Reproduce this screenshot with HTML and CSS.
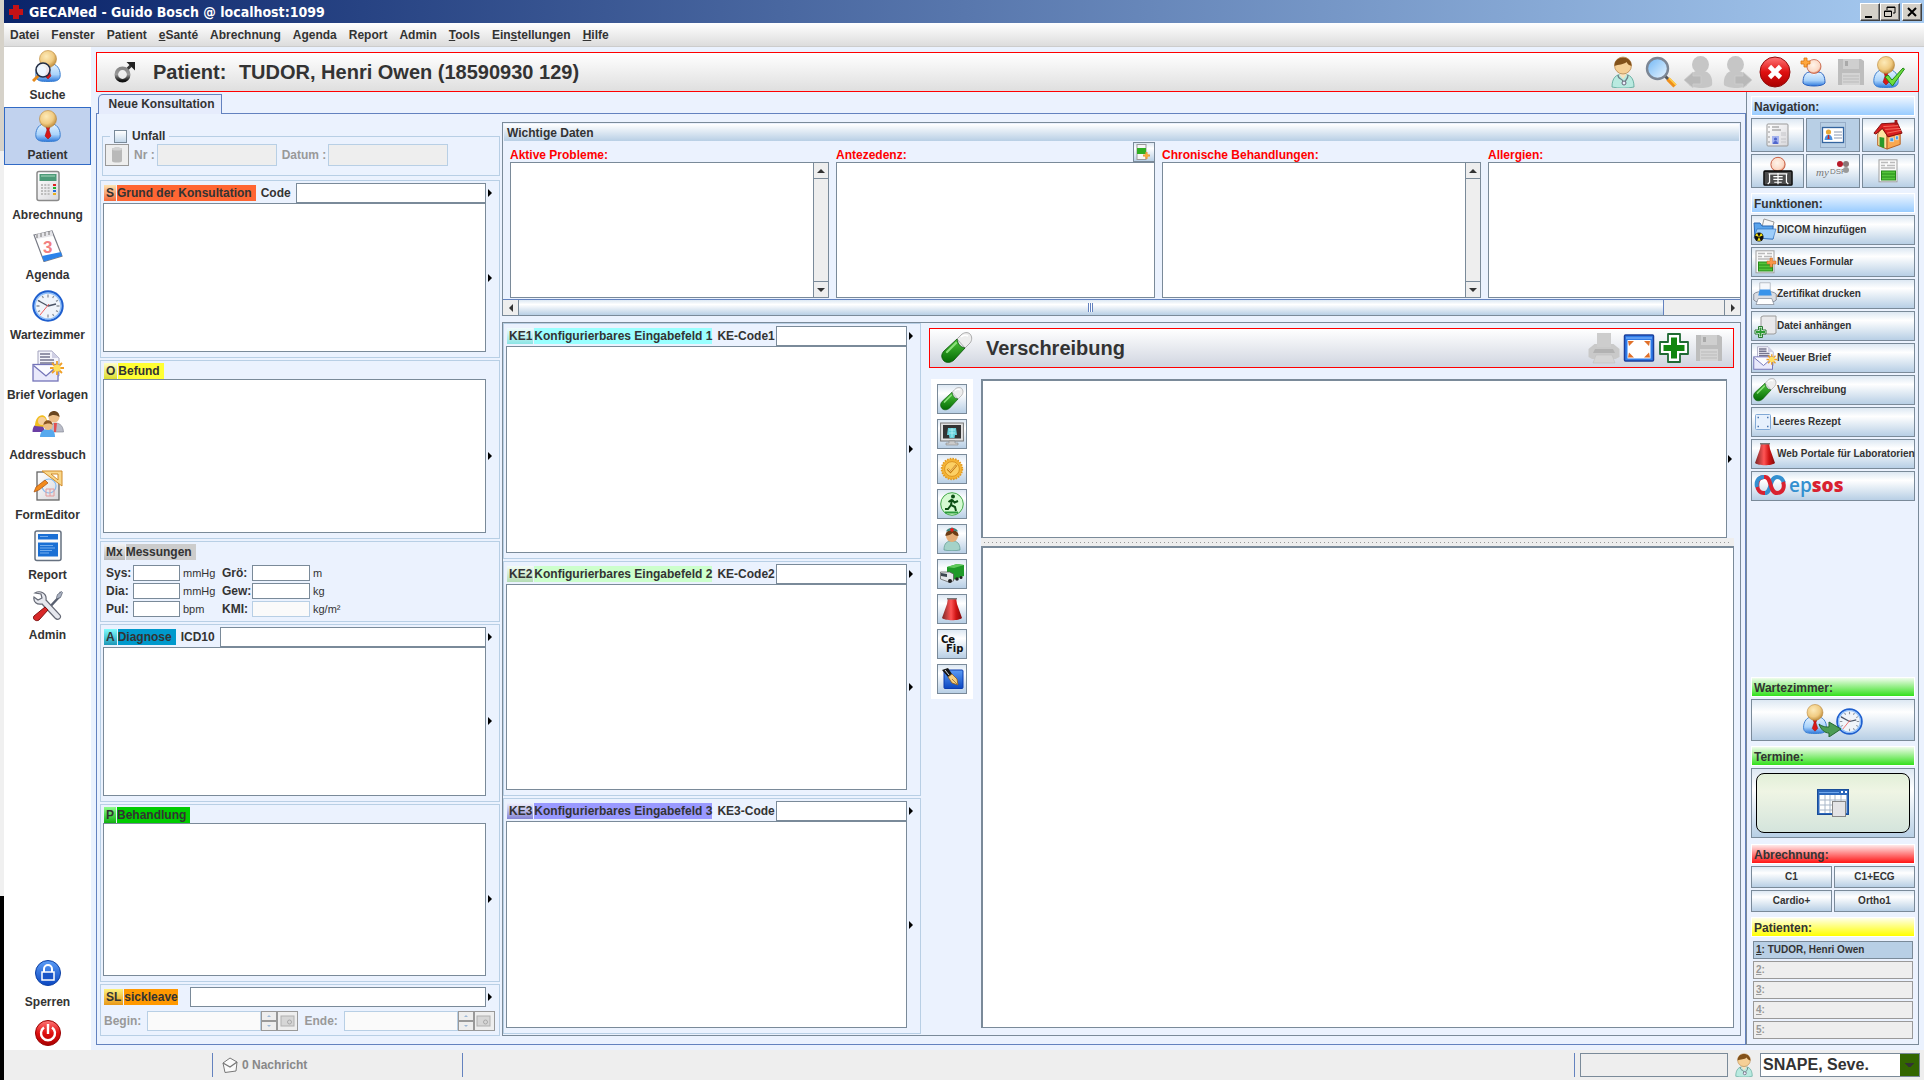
FILE: index.html
```html
<!DOCTYPE html>
<html lang="de">
<head>
    <meta charset="utf-8">
    <title>GECAMed - Guido Bosch @ localhost:1099</title>
    <link rel="stylesheet" href="styles.css">
</head>
<body>
    <!-- shared icons -->
    <svg class="defs" width="0" height="0" aria-hidden="true">
        <defs>
            <radialGradient id="gSkin" cx=".4" cy=".35" r=".7"><stop offset="0" stop-color="#fdeab8"/><stop offset=".6" stop-color="#f0cb82"/><stop offset="1" stop-color="#b98534"/></radialGradient>
            <radialGradient id="gPink" cx=".45" cy=".4" r=".65"><stop offset="0" stop-color="#fff4ea"/><stop offset=".7" stop-color="#fbd9c6"/><stop offset="1" stop-color="#cc5530"/></radialGradient>
            <linearGradient id="gBody" x1="0" y1="0" x2="0" y2="1"><stop offset="0" stop-color="#e4f2ff"/><stop offset=".6" stop-color="#a9d3fb"/><stop offset="1" stop-color="#2e79dc"/></linearGradient>
            <linearGradient id="gBlue" x1="0" y1="0" x2="0" y2="1"><stop offset="0" stop-color="#5b9cf6"/><stop offset="1" stop-color="#0a46c0"/></linearGradient>
            <linearGradient id="gRed" x1="0" y1="0" x2="0" y2="1"><stop offset="0" stop-color="#f77"/><stop offset=".5" stop-color="#e01010"/><stop offset="1" stop-color="#a80000"/></linearGradient>
            <linearGradient id="gFlask" x1="0" y1="0" x2="1" y2="0"><stop offset="0" stop-color="#7a2626"/><stop offset=".45" stop-color="#f55"/><stop offset=".7" stop-color="#d01414"/><stop offset="1" stop-color="#800c0c"/></linearGradient>
            <linearGradient id="gPaper" x1="0" y1="0" x2="1" y2="1"><stop offset="0" stop-color="#fff"/><stop offset="1" stop-color="#d8d8dc"/></linearGradient>
            <linearGradient id="gGreen" x1="0" y1="0" x2="0" y2="1"><stop offset="0" stop-color="#4cc43a"/><stop offset="1" stop-color="#046a04"/></linearGradient>
            <linearGradient id="gLens" x1="0" y1="0" x2="1" y2="1"><stop offset="0" stop-color="#6fb6f5"/><stop offset="1" stop-color="#edf7ff"/></linearGradient>
            <linearGradient id="gSteel" x1="0" y1="0" x2="0" y2="1"><stop offset="0" stop-color="#888"/><stop offset=".5" stop-color="#999"/><stop offset="1" stop-color="#111"/></linearGradient>
        </defs>

        <symbol id="person" viewBox="0 0 32 32">
            <path d="M4 27c-1-6 2-12 7-13h10c5 1 8 7 7 13-1 4-5 4.500-12 4.500S5 31 4 27z" fill="url(#gBody)" stroke="#3b7fd0"/>
            <path d="M11 14l5 5 5-5z" fill="#fff"/>
            <path d="M14 17h4l-1 3 2 6-3 3-3-3 2-6z" fill="#d81818" stroke="#901010" stroke-width=".5"/>
            <circle cx="16" cy="9" r="8.500" fill="url(#gSkin)" stroke="#b88438" stroke-width=".6"/>
        </symbol>
        <symbol id="patient-search" viewBox="0 0 32 32">
            <use href="#person"/>
            <path d="M1 31l7-7" stroke="#e58a1c" stroke-width="3"/>
            <circle cx="11" cy="20" r="7" fill="#f4faff" fill-opacity=".9" stroke="#222d44" stroke-width="1.600"/>
        </symbol>
        <symbol id="calculator" viewBox="0 0 32 32">
            <rect x="5" y="1.500" width="22" height="29" rx="2" fill="url(#gPaper)" stroke="#8a8a8a" stroke-width="1.500"/>
            <rect x="7.500" y="4" width="17" height="7" fill="#4d9a78"/><path d="M9 6h14" stroke="#a8d8bc"/>
            <path d="M9 15h9M9 18h9M9 21h9M9 24h9" stroke="#bdbdbd" stroke-width="2" stroke-dasharray="2 1.300"/>
            <path d="M21 15h3" stroke="#e02020" stroke-width="2"/><path d="M21 18h3" stroke="#20b030" stroke-width="2"/><path d="M21 21h3" stroke="#2a70e0" stroke-width="2"/><path d="M21 24h3" stroke="#e8b020" stroke-width="2"/>
        </symbol>
        <symbol id="clock" viewBox="0 0 32 32">
            <circle cx="16" cy="16" r="14.500" fill="#fff" stroke="#1f5fce" stroke-width="2.400"/>
            <circle cx="16" cy="16" r="13" fill="#f0f4fa" stroke="#8dbdf8" stroke-width="1.400"/>
            <path d="M16 4.500v3M16 24.500v3M4.500 16h3M24.500 16h3M10.200 6l1.200 2M20.600 24l1.200 2M6 10.200l2 1.200M24 20.600l2 1.200M21.800 6l-1.200 2M6 21.800l2-1.200M26 10.200l-2 1.200" stroke="#8b929c" stroke-width="1.300"/>
            <path d="M16 16L6 10.500M16 16l8-2" stroke="#4b5365" stroke-width="1.400"/><path d="M17 14L8 25" stroke="#f06060" stroke-width="1"/>
        </symbol>
        <symbol id="letter" viewBox="0 0 32 32">
            <path d="M6 1h14l7 7v18H6z" fill="#f4f4fb" stroke="#a2a2bd"/>
            <path d="M20 1l7 7h-7z" fill="#cfcfe4"/>
            <path d="M8 4h10M8 7h10M8 10h14M8 13h14" stroke="#74748f" stroke-width="1.700"/>
            <rect x="1" y="14.500" width="25" height="16.500" fill="#e9e9fb" stroke="#7474b8" stroke-width="1.300"/>
            <path d="M1.500 15.500L14 26l12-10.500" fill="#fbfbff" stroke="#7474b8" stroke-width="1.300"/>
            <path d="M25 11v14M18 18h14M20 13l10 10M30 13L20 23" stroke="#f0a028" stroke-width="1.800"/><circle cx="25" cy="18" r="3.600" fill="#ffe060"/>
        </symbol>
        <symbol id="people" viewBox="0 0 32 32">
            <path d="M18 22c0-6 2-9 5-9s8 1 8.500 9z" fill="#b9bcc8" stroke="#7a7e8c" stroke-width=".6"/><path d="M22 13h3l-1 9h-2z" fill="#e25050"/>
            <circle cx="22" cy="7" r="5.500" fill="#eec08a"/><path d="M16.500 7c0-8 11-8 11 0-3-2-7-3-11 0z" fill="#6a4620"/>
            <path d="M.5 22c0-5 2-8 6-8s6 4 6 8z" fill="#6b3ea4"/>
            <path d="M3 16c0-13 12-14 12-4l-1 5z" fill="#f2be1e"/><circle cx="10" cy="11" r="4" fill="#f6cf9c"/>
            <path d="M8 27c0-5 3-8 8-8s7 3 7 8z" fill="#57a9ee"/>
            <circle cx="16" cy="15.500" r="4.500" fill="#eebe84"/><path d="M11.500 15c0-6.500 9-6.500 9 0-2-2-6-2-9 0z" fill="#8a5522"/>
        </symbol>
        <symbol id="form-editor" viewBox="0 0 32 32">
            <rect x="5" y="2" width="22" height="28" fill="url(#gPaper)" stroke="#666" stroke-width="1.300"/>
            <circle cx="17" cy="16" r="7" fill="none" stroke="#86bdf0" stroke-width="1.200"/>
            <path d="M14 19h8v7h-8zM18 19v7" fill="none" stroke="#e59a9a"/>
            <path d="M10 1h20v15z" fill="#f9d88c" stroke="#d08a28"/><path d="M19 4h7v6z" fill="#fff" stroke="#d08a28"/>
            <path d="M2 22l2-5 9-7 3 3-9 7z" fill="#f28a1c" stroke="#a85010" stroke-width=".7"/>
        </symbol>
        <symbol id="report" viewBox="0 0 32 32">
            <rect x="3" y="1" width="26" height="29.500" rx="2" fill="#fafafa" stroke="#667180" stroke-width="1.500"/>
            <rect x="6" y="4" width="20" height="5.500" fill="#1a6fd4"/><rect x="6" y="12.500" width="20" height="14" fill="#1a6fd4"/>
            <path d="M8 6.500h8M8 15.500h13M8 18h15M8 20.500h12M8 23h9" stroke="#7fb4f0" stroke-width=".9"/>
        </symbol>
        <symbol id="tools" viewBox="0 0 32 32">
            <path d="M29 2l-2 5-12 13" fill="none" stroke="#596070" stroke-width="2.400"/><path d="M29.500 1.500l1 1-2 5-3 1-1-1 1-3z" fill="#aab2c2" stroke="#596070" stroke-width=".7"/>
            <path d="M3 3c5-3 12 0 11 7l14 15c2 3-2 6-5 3L10 14c-5 1-9-2-8-7l4 3 4-2-1-4z" fill="#e6e8ee" stroke="#646874" stroke-width="1.200"/>
            <path d="M13 17l3 3-9 10c-3 2-7-1-5-4z" fill="#d82828" stroke="#801010"/>
        </symbol>
        <symbol id="lock" viewBox="0 0 32 32">
            <circle cx="16" cy="16" r="12.500" fill="url(#gBlue)" stroke="#0b3fa4"/>
            <rect x="10" y="15" width="12" height="8" fill="#1a55c8" stroke="#fff" stroke-width="1.500"/><path d="M12 15v-3a4 4 0 0 1 8 0v3" fill="none" stroke="#fff" stroke-width="2"/>
        </symbol>
        <symbol id="power" viewBox="0 0 32 32">
            <circle cx="16" cy="16" r="12.500" fill="url(#gRed)" stroke="#900"/>
            <path d="M12 10.500a7 7 0 1 0 8 0M16 7v10" fill="none" stroke="#fff" stroke-width="2.400"/>
        </symbol>
        <symbol id="male" viewBox="0 0 24 24">
            <path d="M13 10.500l5-5" stroke="#3a3a3a" stroke-width="3"/><path d="M13.500 2H22v8.500l-3-3-2.500-2.500z" fill="#222"/>
            <circle cx="9.500" cy="14.500" r="6.200" fill="none" stroke="url(#gSteel)" stroke-width="3.600"/>
        </symbol>
        <symbol id="doctor" viewBox="0 0 32 32">
            <path d="M5 31c0-9 4-13 11-13s11 4 11 13c-6 1.500-16 1.500-22 0z" fill="#b9eae0" stroke="#62ac9e" stroke-width=".9"/>
            <path d="M12 18l4 5 4-5z" fill="#f7e2c0"/><path d="M11 19c0 5 5 3 5 7M21 19c0 5-3 4-3 8" fill="none" stroke="#6d8088" stroke-width="1.300"/><circle cx="17" cy="27" r="2" fill="#eef" stroke="#667"/>
            <circle cx="16" cy="9.500" r="8.500" fill="#f5cf96" stroke="#a87030" stroke-width=".6"/><path d="M7.500 10C7-1.500 25-1.500 24.500 10c-3-1-4-2-5-4-3 3-8 2-12 4z" fill="#82511a"/>
        </symbol>
        <symbol id="magnifier" viewBox="0 0 32 32">
            <path d="M20 20l5 5" stroke="#555" stroke-width="3"/><path d="M23 23l7 7" stroke="#ef8f1c" stroke-width="4.500"/><path d="M24 22l7 7" stroke="#ffd24c" stroke-width="1.500"/>
            <circle cx="12.500" cy="12.500" r="10.500" fill="url(#gLens)" stroke="#7c8694" stroke-width="2.400"/>
        </symbol>
        <symbol id="prev-patient" viewBox="0 0 32 32">
            <g fill="#c6c6c6"><path d="M6 29c-1-8 3-13 7-14h8c6 1 9 7 8 14-2 4-19 4-23 0z"/><circle cx="17.500" cy="8.500" r="8.500"/></g><path d="M1 24l9-8v4h8v8h-8v4z" fill="#b9b9b9" stroke="#cecece" stroke-width=".8"/>
        </symbol>
        <symbol id="next-patient" viewBox="0 0 32 32">
            <g fill="#c6c6c6"><path d="M3 29c-1-8 3-13 7-14h8c6 1 9 7 8 14-2 4-19 4-23 0z"/><circle cx="14.500" cy="8.500" r="8.500"/></g><path d="M31 24l-9-8v4h-8v8h8v4z" fill="#b9b9b9" stroke="#cecece" stroke-width=".8"/>
        </symbol>
        <symbol id="cancel" viewBox="0 0 32 32">
            <circle cx="16" cy="16" r="15" fill="url(#gRed)" stroke="#900c0c"/><path d="M10.500 10.500l11 11M21.500 10.500l-11 11" stroke="#fff" stroke-width="4.600"/>
        </symbol>
        <symbol id="add-patient" viewBox="0 0 32 32">
            <path d="M6 27c0-7 2-10 6-11h10c4 1 6 4 6 11-2 4-20 4-22 0z" fill="url(#gBody)" stroke="#2a62c0"/><path d="M13 15l4 4 4-4z" fill="#fff"/>
            <circle cx="17" cy="10.500" r="7" fill="url(#gPink)" stroke="#c05030" stroke-width=".7"/>
            <path d="M7 2h3v3h3v3h-3v3H7V8H4V5h3z" fill="#ffa63c" stroke="#d87410" stroke-width=".8"/>
        </symbol>
        <symbol id="floppy" viewBox="0 0 32 32">
            <path d="M3 3h23l3 2v24H3z" fill="#bdbdbd"/><path d="M8 3h16v10H8z" fill="#cfcfcf"/><path d="M10 5h3v5h-3z" fill="#a9a9a9"/><path d="M7 17h18v12H7z" fill="#d4d4d4"/><path d="M8 20h16M8 23h16M8 26h16" stroke="#bbb"/>
        </symbol>
        <symbol id="confirm-patient" viewBox="0 0 32 32">
            <g transform="translate(-3 0)"><use href="#person" width="32" height="32"/></g><path d="M12 21l3-2 4 5 11-12 1.500 1-12 17z" fill="#6fdd3c" stroke="#1e8a14" stroke-width="1"/>
        </symbol>
        <symbol id="history" viewBox="0 0 24 24">
            <rect x="1" y="1" width="21" height="22" rx="1" fill="url(#gPaper)" stroke="#999"/><path d="M6 4h7M6 7h9" stroke="#888"/><path d="M15 10h5M15 12h5M15 16h5M15 19h5" stroke="#c4c4c8"/><path d="M3 3v18" stroke="#999" stroke-dasharray="2 3"/><rect x="6" y="13" width="7" height="8" fill="#a6b4ee"/><path d="M7 21c0-4 5-4 5 0z" fill="#4f66cc"/><circle cx="9.500" cy="16" r="1.600" fill="#4f66cc"/>
        </symbol>
        <symbol id="id-card" viewBox="0 0 26 26">
            <rect x=".5" y=".5" width="25" height="25" fill="none" stroke="#98aec8"/>
            <rect x="2.500" y="5.500" width="21" height="15" fill="#fff" stroke="#35659f" stroke-width="1.300"/><circle cx="8.500" cy="10" r="2.600" fill="#e8a838"/><path d="M4.500 18c0-7 8-7 8 0z" fill="#4a90e0"/><path d="M8 13h1l.5 4h-2z" fill="#c22"/><path d="M14 10h8M14 13h8M14 16h8" stroke="#8a98b0"/>
        </symbol>
        <symbol id="home" viewBox="0 0 32 32">
            <path d="M5 15l4-7 6 7v16L5 27z" fill="#ffe3a0" stroke="#b45c20"/><path d="M15 16l14-3v13l-14 5z" fill="#f9a850" stroke="#b45c20"/>
            <path d="M1 14L9 4l17-1 5 11-15 4-6-9-7 6z" fill="#d81e1e" stroke="#7c0a0a"/><path d="M11 7l16-1M13 10l16-1M15 14l15-3" stroke="#f67060"/><path d="M23 0h3v5h-3z" fill="#a01818"/>
            <path d="M7 18l5 1v11l-5-2z" fill="#2a9a2a"/><path d="M18 19h4v4h-4zM24 17h3v4h-3z" fill="#3f9de8" stroke="#fff" stroke-width=".6"/>
        </symbol>
        <symbol id="radiology" viewBox="0 0 32 32">
            <circle cx="16" cy="9" r="7.600" fill="url(#gPink)" stroke="#c4583c"/><rect x="1" y="16" width="30" height="15" rx="1" fill="#4c4c4c" stroke="#000" stroke-width="1.400"/>
            <path d="M6 19h20M16 18v12M11 22h10M11 25h10M12 28h8M7 19v9l-2 2M25 19v9l2 2" stroke="#fff" stroke-width="1.300" fill="none"/>
        </symbol>
        <symbol id="form" viewBox="0 0 24 24">
            <rect x="3" y=".8" width="18" height="22" fill="#fafafa" stroke="#a0a0a0"/><path d="M5 3.500h7M14 3.500h5M5 6.500h4M11 6.500h8M5 9h14" stroke="#bbb" stroke-width="1.400"/><rect x="5.500" y="12" width="14" height="9" fill="#54c43a" stroke="#278a18"/><path d="M6 15h13M6 18h13" stroke="#278a18"/>
        </symbol>
        <symbol id="form-new" viewBox="0 0 24 24">
            <use href="#form" width="24" height="24"/><path d="M17 8h2.500v3H23v3h-3.500v3H17v-3h-3v-3h3z" fill="#f8964a" stroke="#c8601c" stroke-width=".5"/>
        </symbol>
        <symbol id="dicom" viewBox="0 0 24 24">
            <path d="M11 1l10 3-3 13-10-4z" fill="#f8f8f8" stroke="#999"/><path d="M1 5h6l2 3h11v13L2 20z" fill="#5aa4ec" stroke="#2766b4"/><path d="M1 20l3-9h19l-3 10z" fill="#9ccdfa" stroke="#2766b4" stroke-width=".6"/>
            <circle cx="6" cy="19" r="4.600" fill="#111"/><path d="M6 19l-3.800-1.500 1.800-2.400zM6 19l3.800-1.500-1.800-2.400zM6 19l-1.800 3.800h3.600z" fill="#f6e410"/>
        </symbol>
        <symbol id="printer" viewBox="0 0 32 32">
            <path d="M1 16c4-5 26-5 30 0v8c-4 5-26 5-30 0z" fill="#d9dce2" stroke="#6f7785"/><path d="M9 1h14v16H9z" fill="#f4f7fb" stroke="#a7adb7"/><path d="M9 10h14l2 8H7z" fill="#3a94ea"/><path d="M7 22h18l3 8H4z" fill="#fff" stroke="#878d99"/>
        </symbol>
        <symbol id="printer-off" viewBox="0 0 32 32">
            <path d="M.500 17l6-5h19l6 5v8l-4 2H4l-3.500-2z" fill="#c9c9c9"/><path d="M9 1h14v14H9z" fill="#cdcdcd"/><path d="M7 17h18l2 4H5z" fill="#b2b2b2"/><path d="M8 23h16l3 8H5z" fill="#d5d5d5" stroke="#c0c0c0" stroke-width=".6"/>
        </symbol>
        <symbol id="attach" viewBox="0 0 24 24">
            <path d="M8 3l2-1h13v17l-2 1H8z" fill="#e9e9eb" stroke="#9a9a9a"/><path d="M5.500 12.500h4v3.500H13v4H9.500v3.500h-4V20H2v-4h3.500z" fill="#fff" stroke="#2a7a32"/><path d="M6.500 13.500h2v3.500H12v2H8.500v3.500h-2V19H3v-2h3.500z" fill="#2c9c34"/>
        </symbol>
        <symbol id="pill" viewBox="0 0 32 32">
            <path d="M16 7l4-4c3-3 7-3 9-1s2.500 6 0 9l-5 5z" fill="#ededed" stroke="#999" stroke-width=".8"/><path d="M20 5c2-2 5-2 7-1" stroke="#fff" stroke-width="1.600" fill="none"/>
            <path d="M16 7c1 5 3 8 8 9L13 28c-3 3-8 3-10 1-3-3-3-7 0-10z" fill="url(#gGreen)" stroke="#065006" stroke-width=".8"/><path d="M6 20l9-9" stroke="#8be07c" stroke-width="2.200" stroke-linecap="round"/>
        </symbol>
        <symbol id="blank" viewBox="0 0 16 16">
            <rect x=".5" y=".5" width="15" height="15" rx="1" fill="#e7f1fd" stroke="#81a9d6"/><path d="M2.500 3.500h1.500M12 3.500h1.500M2.500 12.500h1.500M12 12.500h1.500" fill="none" stroke="#4b77b0" stroke-width="1.500"/>
        </symbol>
        <symbol id="flask" viewBox="0 0 24 24">
            <path d="M8 1h8l1 6 5 14c-3 3-17 3-20 0L7 7z" fill="url(#gFlask)"/><path d="M7 1h10v1.500H7z" fill="#777"/>
        </symbol>
        <symbol id="to-waitroom" viewBox="0 0 62 34">
            <use href="#person" x="-2" y="0" width="30" height="32"/><use href="#clock" x="34" y="5" width="27" height="27"/><path d="M17 21c4 3 7 3 10 3v-5l12 7-12 8v-4c-4 0-8-3-10-9z" fill="#4c9c54" stroke="#246830"/>
        </symbol>
        <symbol id="appointment" viewBox="0 0 32 28">
            <rect x=".5" y=".5" width="31" height="25" fill="#2c68bc" stroke="#1a4c98"/><rect x="2.500" y="6" width="27" height="18" fill="#fff"/><path d="M2 11h28M2 16h28M2 21h28M8 6v18M13 6v18M18 6v18M24 6v18" stroke="#a9b7c8"/><path d="M2 3.500h20" stroke="#72a8ec"/><rect x="24" y="2" width="2" height="2" fill="#fff"/><rect x="28" y="2" width="2" height="2" fill="#fff"/><rect x="15.500" y="12.500" width="13" height="15" fill="#e4e4e6" stroke="#888"/>
        </symbol>
        <symbol id="fullscreen" viewBox="0 0 32 32">
            <rect x="1.500" y="3" width="29" height="26" rx="1" fill="#2f7be8" stroke="#1b3f9c" stroke-width="1.500"/><path d="M3 6h26" stroke="#8dbcf8"/><rect x="4.500" y="8" width="23" height="18.500" fill="#fff"/><path d="M5 9h6l-5 5zM27 9h-6l5 5zM5 25.500h6l-5-5zM27 25.500h-6l5-5z" fill="#e0702a"/>
        </symbol>
        <symbol id="add" viewBox="0 0 32 32">
            <path d="M10 2h12v8h8v12h-8v8H10v-8H2V10h8z" fill="#fff" stroke="#1f6a33" stroke-width="1.800" stroke-linejoin="round"/><path d="M13 5.500h6V13h7.500v6H19v7.500h-6V19H5.500v-6H13z" fill="#11860f"/>
        </symbol>
        <symbol id="xray" viewBox="0 0 24 24">
            <rect x=".6" y="1" width="22.800" height="18" fill="#e1e1e1" stroke="#777"/><rect x="3" y="3" width="18" height="13.500" fill="#333"/><path d="M8 6h8l1 7h-2l-.5 3h-5L9 13H7z" fill="#67d0da"/><path d="M12 6v9M9 8h6M9 11h6" stroke="#b8f4f8" stroke-width=".8"/><path d="M9 19h6v2h3v2H6v-2h3z" fill="#ccc" stroke="#888" stroke-width=".6"/>
        </symbol>
        <symbol id="seal" viewBox="0 0 24 24">
            <circle cx="12" cy="12" r="10.300" fill="#f5b434" stroke="#e29a20" stroke-width="1.800" stroke-dasharray="1.600 1.100"/><circle cx="12" cy="12" r="7.400" fill="#fcd064" stroke="#dc9420"/><path d="M7.500 12l3 3 6-7" fill="none" stroke="#c87c10" stroke-width="2.200"/><path d="M8 12l2.500 2.400 5.500-6" fill="none" stroke="#ffe9a0" stroke-width=".8"/>
        </symbol>
        <symbol id="runner" viewBox="0 0 24 24">
            <circle cx="12" cy="12" r="11.300" fill="#d5fad2" stroke="#44a84a"/><path d="M5 19.500h13v2H5z" fill="#2a9a3c"/><circle cx="13" cy="4.500" r="2" fill="#0d4f14"/><path d="M12 7l-1 6 4 2 1 4M11 13l-3 4H5M12 7.500L8.500 10M12.500 8l2 2.500L18 9" stroke="#0d4f14" stroke-width="2" fill="none"/>
        </symbol>
        <symbol id="nurse" viewBox="0 0 24 24">
            <path d="M4 23c0-7 3-9 8-9s8 2 8 9c-5 1-11 1-16 0z" fill="#a4d2c8" stroke="#5f9a90" stroke-width=".7"/><circle cx="12" cy="9" r="6" fill="#e5ae78"/><path d="M5.500 9C5 1 19 1 18.500 9c-3 0-5-2-6-3-2 2-4 2-7 3z" fill="#6c3c14"/><path d="M6 4.500C8-.5 16-.5 18 4.500c-4-1-8-1-12 0z" fill="#3f837c"/><path d="M12 .8v4M10 2.800h4" stroke="#f01818" stroke-width="1.500"/>
        </symbol>
        <symbol id="truck" viewBox="0 0 24 24">
            <path d="M7 5l10-3 7 1v11l-11 4-6-4z" fill="#1f9a28"/><path d="M7 5l7 1 10-3-7-1z" fill="#60ca5c"/><path d="M.5 10l9 0 4 2v7l-5 1-8-3z" fill="#e3e6ea" stroke="#555" stroke-width=".7"/><path d="M1 11l6 1v3l-6-1z" fill="#3c4650"/><circle cx="10" cy="19" r="2" fill="#222"/><circle cx="17" cy="17" r="1.800" fill="#222"/><circle cx="21" cy="15.500" r="1.500" fill="#222"/>
        </symbol>
        <symbol id="note" viewBox="0 0 24 24">
            <rect x="4" y="3" width="19" height="18.500" rx="1" fill="url(#gBlue)" stroke="#0c3cae"/><path d="M2 3l6-2 4 6-4 3z" fill="#151515"/><path d="M8 10l4-3 5 5 1 6-6-2z" fill="#f4cf80" stroke="#8a5a1c" stroke-width=".8"/><path d="M12 12l5 5" stroke="#8a5a1c" stroke-width=".7"/><path d="M5 3l4 5" stroke="#ddd"/>
        </symbol>
        <symbol id="note-add" viewBox="0 0 16 18">
            <rect x="1" y="1.500" width="9" height="15" fill="#f6f6f6" stroke="#999"/><rect x="1" y="5" width="9" height="6" fill="#2fae22"/><path d="M10.500 9v7M7 12.500h7" stroke="#e8963c" stroke-width="2"/><circle cx="10.500" cy="12.500" r="2" fill="#f4ac3c"/>
        </symbol>
        <symbol id="cylinder" viewBox="0 0 16 18">
            <path d="M3 3c0-2 10-2 10 0v12c0 2-10 2-10 0z" fill="#b9b9b9"/><ellipse cx="8" cy="3" rx="5" ry="1.600" fill="#d2d2d2"/>
        </symbol>
        <symbol id="datepick" viewBox="0 0 16 14">
            <rect x="1" y="2" width="13" height="10" fill="#d6d6d6" stroke="#b0b0b0"/><circle cx="9.500" cy="8" r="2" fill="none" stroke="#a9a9a9"/>
        </symbol>
        <symbol id="mail" viewBox="0 0 16 16">
            <path d="M1 6l7-5 7 4-1 9-11 1.500z" fill="#fafafa" stroke="#777"/><path d="M1 6l7 4 7-5" fill="none" stroke="#777" stroke-width="1.300"/>
        </symbol>
    </svg>

    <div class="desktop">
        <div class="desktop-edge"></div>
        <div class="window">
            <header class="titlebar">
                <svg class="app-logo" viewBox="0 0 16 16"><path d="M5 1h6v4h4v6h-4v4H5v-4H1V5h4z" fill="#c41216"/></svg>
                <span class="window-title">GECAMed - Guido Bosch @ localhost:1099</span>
                <div class="window-buttons">
                    <button type="button" aria-label="Minimieren"><svg viewBox="0 0 16 14"><path d="M3 11h7v2H3z"/></svg></button>
                    <button type="button" aria-label="Wiederherstellen"><svg viewBox="0 0 16 14"><path d="M5 2h8v6h-2M5 2v3M5 2.500h8" fill="none" stroke="#000"/><path d="M2.500 6h7v5.500h-7zM2 6.500h8" fill="none" stroke="#000"/></svg></button>
                    <button type="button" class="close" aria-label="Schließen"><svg viewBox="0 0 16 14"><path d="M4 3l8 8M12 3l-8 8" stroke="#000" stroke-width="2"/></svg></button>
                </div>
            </header>

            <nav class="menubar">
                <a href="#">Datei</a>
                <a href="#">Fenster</a>
                <a href="#">Patient</a>
                <a href="#"><u>e</u>Santé</a>
                <a href="#">Abrechnung</a>
                <a href="#">Agenda</a>
                <a href="#">Report</a>
                <a href="#">Admin</a>
                <a href="#"><u>T</u>ools</a>
                <a href="#">Ein<u>s</u>tellungen</a>
                <a href="#"><u>H</u>ilfe</a>
            </nav>

            <div class="workspace">
                <nav class="modules">
                    <a href="#"><svg><use href="#patient-search"/></svg>Suche</a>
                    <a href="#" class="active"><svg><use href="#person"/></svg>Patient</a>
                    <a href="#"><svg><use href="#calculator"/></svg>Abrechnung</a>
                    <a href="#">
                        <svg viewBox="0 0 32 32">
                            <path d="M2 5l18-4 10 25-18 5.500z" fill="#fff" stroke="#777a85" stroke-width="1.200"/>
                            <path d="M10 26l19-4 1 4-18 5.500z" fill="#2b82ea"/>
                            <path d="M4 4l16-3 1 5-17 3z" fill="#e5e5e9"/><path d="M5 4v4M9 3v4M13 2v4M17 1v4" stroke="#777"/>
                            <text x="11" y="23" class="calendar-day">3</text>
                        </svg>
                        Agenda
                    </a>
                    <a href="#"><svg><use href="#clock"/></svg>Wartezimmer</a>
                    <a href="#"><svg><use href="#letter"/></svg>Brief Vorlagen</a>
                    <a href="#"><svg><use href="#people"/></svg>Addressbuch</a>
                    <a href="#"><svg><use href="#form-editor"/></svg>FormEditor</a>
                    <a href="#"><svg><use href="#report"/></svg>Report</a>
                    <a href="#"><svg><use href="#tools"/></svg>Admin</a>
                    <span class="spacer"></span>
                    <a href="#"><svg><use href="#lock"/></svg>Sperren</a>
                    <a href="#" class="quit" aria-label="Beenden"><svg><use href="#power"/></svg></a>
                </nav>

                <div class="main">
                    <div class="patient-header">
                        <svg class="gender"><use href="#male"/></svg>
                        <h1><span>Patient:</span> TUDOR, Henri Owen (18590930 129)</h1>
                        <div class="header-tools">
                            <button type="button" aria-label="Arzt"><svg><use href="#doctor"/></svg></button>
                            <button type="button" aria-label="Suchen"><svg><use href="#magnifier"/></svg></button>
                            <button type="button" aria-label="Voriger Patient" disabled><svg><use href="#prev-patient"/></svg></button>
                            <button type="button" aria-label="Nächster Patient" disabled><svg><use href="#next-patient"/></svg></button>
                            <button type="button" aria-label="Patient schließen"><svg><use href="#cancel"/></svg></button>
                            <button type="button" aria-label="Neuer Patient"><svg><use href="#add-patient"/></svg></button>
                            <button type="button" aria-label="Speichern" disabled><svg><use href="#floppy"/></svg></button>
                            <button type="button" aria-label="Bestätigen"><svg><use href="#confirm-patient"/></svg></button>
                        </div>
                    </div>

                    <div class="columns">
                        <div class="consultation">
                            <div class="tabs"><button type="button" class="tab">Neue Konsultation</button></div>
                            <div class="tab-body">
                                <!-- SOAP column -->
                                <div class="soap">
                                    <fieldset class="accident">
                                        <legend><label><input type="checkbox"> Unfall</label></legend>
                                        <button type="button" aria-label="Unfall wählen" disabled><svg><use href="#cylinder"/></svg></button>
                                        <label for="accident-nr">Nr :</label><input type="text" id="accident-nr" disabled>
                                        <label for="accident-date">Datum :</label><input type="text" id="accident-date" disabled>
                                    </fieldset>

                                    <section class="entry grow reason">
                                        <div class="entry-head">
                                            <span class="key">S</span><span class="name">Grund der Konsultation</span>
                                            <label for="code-s">Code</label><input type="text" id="code-s">
                                            <button type="button" class="expand" aria-label="Aufklappen"></button>
                                        </div>
                                        <div class="entry-text"><textarea aria-label="Grund der Konsultation"></textarea><button type="button" class="expand" aria-label="Aufklappen"></button></div>
                                    </section>

                                    <section class="entry grow findings">
                                        <div class="entry-head"><span class="key">O</span><span class="name">Befund</span></div>
                                        <div class="entry-text"><textarea aria-label="Befund"></textarea><button type="button" class="expand" aria-label="Aufklappen"></button></div>
                                    </section>

                                    <section class="entry measures">
                                        <div class="entry-head"><span class="key">Mx</span><span class="name">Messungen</span></div>
                                        <div class="measure-grid">
                                            <label for="sys">Sys:</label><input type="text" id="sys"><span>mmHg</span>
                                            <label for="gro">Grö:</label><input type="text" id="gro"><span>m</span>
                                            <label for="dia">Dia:</label><input type="text" id="dia"><span>mmHg</span>
                                            <label for="gew">Gew:</label><input type="text" id="gew"><span>kg</span>
                                            <label for="pul">Pul:</label><input type="text" id="pul"><span>bpm</span>
                                            <label for="kmi">KMI:</label><input type="text" id="kmi" disabled><span>kg/m²</span>
                                        </div>
                                    </section>

                                    <section class="entry grow diagnosis">
                                        <div class="entry-head">
                                            <span class="key">A</span><span class="name">Diagnose</span>
                                            <label for="icd10">ICD10</label><input type="text" id="icd10">
                                            <button type="button" class="expand" aria-label="Aufklappen"></button>
                                        </div>
                                        <div class="entry-text"><textarea aria-label="Diagnose"></textarea><button type="button" class="expand" aria-label="Aufklappen"></button></div>
                                    </section>

                                    <section class="entry grow treatment">
                                        <div class="entry-head"><span class="key">P</span><span class="name">Behandlung</span></div>
                                        <div class="entry-text"><textarea aria-label="Behandlung"></textarea><button type="button" class="expand" aria-label="Aufklappen"></button></div>
                                    </section>

                                    <section class="entry sickleave">
                                        <div class="entry-head">
                                            <span class="key">SL</span><label class="name" for="sick">sickleave</label><input type="text" id="sick">
                                            <button type="button" class="expand" aria-label="Aufklappen"></button>
                                        </div>
                                        <div class="period">
                                            <label for="begin">Begin:</label>
                                            <div class="date-field">
                                                <input type="text" id="begin" disabled>
                                                <div class="spin"><button type="button" class="up" disabled aria-label="Später"></button><button type="button" class="down" disabled aria-label="Früher"></button></div>
                                                <button type="button" class="pick" disabled aria-label="Datum wählen"><svg><use href="#datepick"/></svg></button>
                                            </div>
                                            <label for="end">Ende:</label>
                                            <div class="date-field">
                                                <input type="text" id="end" disabled>
                                                <div class="spin"><button type="button" class="up" disabled aria-label="Später"></button><button type="button" class="down" disabled aria-label="Früher"></button></div>
                                                <button type="button" class="pick" disabled aria-label="Datum wählen"><svg><use href="#datepick"/></svg></button>
                                            </div>
                                        </div>
                                    </section>
                                </div>

                                <div class="record">
                                    <section class="important">
                                        <h2>Wichtige Daten</h2>
                                        <div class="important-view">
                                            <div class="important-list">
                                                <div class="list-head"><label for="problems">Aktive Probleme:</label></div>
                                                <div class="list-box"><textarea id="problems"></textarea><div class="vscroll"><button type="button" class="up" aria-label="Hoch"></button><button type="button" class="down" aria-label="Runter"></button></div></div>
                                            </div>
                                            <div class="important-list">
                                                <div class="list-head"><label for="antecedents">Antezedenz:</label><button type="button" aria-label="Neuer Eintrag"><svg><use href="#note-add"/></svg></button></div>
                                                <div class="list-box"><textarea id="antecedents"></textarea></div>
                                            </div>
                                            <div class="important-list">
                                                <div class="list-head"><label for="chronic">Chronische Behandlungen:</label></div>
                                                <div class="list-box"><textarea id="chronic"></textarea><div class="vscroll"><button type="button" class="up" aria-label="Hoch"></button><button type="button" class="down" aria-label="Runter"></button></div></div>
                                            </div>
                                            <div class="important-list">
                                                <div class="list-head"><label for="allergies">Allergien:</label></div>
                                                <div class="list-box"><textarea id="allergies"></textarea></div>
                                            </div>
                                        </div>
                                        <div class="hscroll">
                                            <button type="button" class="left" aria-label="Links"></button>
                                            <div class="track"><div class="thumb"></div></div>
                                            <button type="button" class="right" aria-label="Rechts"></button>
                                        </div>
                                    </section>

                                    <div class="details">
                                        <div class="custom">
                                            <section class="entry grow ke1">
                                                <div class="entry-head">
                                                    <span class="key">KE1</span><span class="name">Konfigurierbares Eingabefeld 1</span>
                                                    <label for="ke-1">KE-Code1</label><input type="text" id="ke-1">
                                                    <button type="button" class="expand" aria-label="Aufklappen"></button>
                                                </div>
                                                <div class="entry-text"><textarea aria-label="Eingabefeld 1"></textarea><button type="button" class="expand" aria-label="Aufklappen"></button></div>
                                            </section>
                                            <section class="entry grow ke2">
                                                <div class="entry-head">
                                                    <span class="key">KE2</span><span class="name">Konfigurierbares Eingabefeld 2</span>
                                                    <label for="ke-2">KE-Code2</label><input type="text" id="ke-2">
                                                    <button type="button" class="expand" aria-label="Aufklappen"></button>
                                                </div>
                                                <div class="entry-text"><textarea aria-label="Eingabefeld 2"></textarea><button type="button" class="expand" aria-label="Aufklappen"></button></div>
                                            </section>
                                            <section class="entry grow ke3">
                                                <div class="entry-head">
                                                    <span class="key">KE3</span><span class="name">Konfigurierbares Eingabefeld 3</span>
                                                    <label for="ke-3">KE3-Code</label><input type="text" id="ke-3">
                                                    <button type="button" class="expand" aria-label="Aufklappen"></button>
                                                </div>
                                                <div class="entry-text"><textarea aria-label="Eingabefeld 3"></textarea><button type="button" class="expand" aria-label="Aufklappen"></button></div>
                                            </section>
                                        </div>

                                        <section class="prescription">
                                            <div class="prescription-header">
                                                <svg class="pill"><use href="#pill"/></svg>
                                                <h2>Verschreibung</h2>
                                                <div class="header-tools">
                                                    <button type="button" aria-label="Drucken" disabled><svg><use href="#printer-off"/></svg></button>
                                                    <button type="button" aria-label="Vollbild"><svg><use href="#fullscreen"/></svg></button>
                                                    <button type="button" aria-label="Hinzufügen"><svg><use href="#add"/></svg></button>
                                                    <button type="button" aria-label="Speichern" disabled><svg><use href="#floppy"/></svg></button>
                                                </div>
                                            </div>
                                            <div class="prescription-body">
                                                <div class="kinds">
                                                    <button type="button" aria-label="Medikamente"><svg><use href="#pill"/></svg></button>
                                                    <button type="button" aria-label="Radiologie"><svg><use href="#xray"/></svg></button>
                                                    <button type="button" aria-label="Zertifikat"><svg><use href="#seal"/></svg></button>
                                                    <button type="button" aria-label="Physiotherapie"><svg><use href="#runner"/></svg></button>
                                                    <button type="button" aria-label="Pflege"><svg><use href="#nurse"/></svg></button>
                                                    <button type="button" aria-label="Transport"><svg><use href="#truck"/></svg></button>
                                                    <button type="button" aria-label="Labor"><svg><use href="#flask"/></svg></button>
                                                    <button type="button" class="cefip"><span>Ce</span><span>Fip</span></button>
                                                    <button type="button" aria-label="Freitext"><svg><use href="#note"/></svg></button>
                                                </div>
                                                <div class="editors">
                                                    <div class="entry-text editor-top"><textarea aria-label="Verschreibungstext"></textarea><button type="button" class="expand" aria-label="Aufklappen"></button></div>
                                                    <div class="divider"></div>
                                                    <textarea class="editor-bottom" aria-label="Verschreibungen"></textarea>
                                                </div>
                                            </div>
                                        </section>
                                    </div>
                                </div>
                            </div>
                        </div>

                        <aside class="shortcuts">
                            <h3>Navigation:</h3>
                            <div class="nav-grid">
                                <button type="button" aria-label="Verlauf"><svg class="s24"><use href="#history"/></svg></button>
                                <button type="button" aria-label="Patientendaten" class="selected"><svg class="s26"><use href="#id-card"/></svg></button>
                                <button type="button" aria-label="Familie"><svg class="s30"><use href="#home"/></svg></button>
                                <button type="button" aria-label="Bilder"><svg class="s30"><use href="#radiology"/></svg></button>
                                <button type="button" aria-label="myDSP">
                                    <svg class="dsp" viewBox="0 0 34 20">
                                        <text x="0" y="15" class="dsp-my">my</text><text x="14" y="13" class="dsp-name">DSP</text>
                                        <circle cx="24" cy="3" r="3" fill="#b81828"/><circle cx="30" cy="3" r="3" fill="#8a7878"/><circle cx="30" cy="9" r="3" fill="#9a9a9a"/>
                                    </svg>
                                </button>
                                <button type="button" aria-label="Formulare"><svg class="s24"><use href="#form"/></svg></button>
                            </div>

                            <h3>Funktionen:</h3>
                            <div class="functions">
                                <button type="button"><svg><use href="#dicom"/></svg>DICOM hinzufügen</button>
                                <button type="button"><svg><use href="#form-new"/></svg>Neues Formular</button>
                                <button type="button"><svg><use href="#printer"/></svg>Zertifikat drucken</button>
                                <button type="button"><svg><use href="#attach"/></svg>Datei anhängen</button>
                                <button type="button"><svg><use href="#letter"/></svg>Neuer Brief</button>
                                <button type="button"><svg><use href="#pill"/></svg>Verschreibung</button>
                                <button type="button"><svg class="small"><use href="#blank"/></svg>Leeres Rezept</button>
                                <button type="button"><svg><use href="#flask"/></svg>Web Portale für Laboratorien</button>
                                <button type="button" class="epsos">
                                    <svg viewBox="0 0 32 24">
                                        <g fill="none" stroke-width="4">
                                            <path d="M12 4h-2C1 4 1 20 10 20h2" stroke="#d92230"/>
                                            <path d="M10 4c-7 0-8 6-7 10" stroke="#3590d0"/>
                                            <path d="M11 20c7 0 4-16 12-16 4 0 6 3 7 6" stroke="#3590d0"/>
                                            <path d="M11 4c7 0 4 16 12 16 6 0 8-6 6-11" stroke="#d92230"/>
                                        </g>
                                    </svg>
                                    <span>ep<b>sos</b></span>
                                </button>
                            </div>

                            <span class="spacer"></span>

                            <h3 class="green">Wartezimmer:</h3>
                            <button type="button" class="waitroom" aria-label="Ins Wartezimmer"><svg><use href="#to-waitroom"/></svg></button>
                            <h3 class="green">Termine:</h3>
                            <button type="button" class="appointments" aria-label="Termine"><span><svg><use href="#appointment"/></svg></span></button>
                            <h3 class="red">Abrechnung:</h3>
                            <div class="billing">
                                <button type="button">C1</button>
                                <button type="button">C1+ECG</button>
                                <button type="button">Cardio+</button>
                                <button type="button">Ortho1</button>
                            </div>
                            <h3 class="yellow">Patienten:</h3>
                            <div class="recent">
                                <button type="button" class="selected"><u>1</u>: TUDOR, Henri Owen</button>
                                <button type="button" disabled><u>2</u>:</button>
                                <button type="button" disabled><u>3</u>:</button>
                                <button type="button" disabled><u>4</u>:</button>
                                <button type="button" disabled><u>5</u>:</button>
                            </div>
                        </aside>
                    </div>
                </div>
            </div>

            <footer class="statusbar">
                <div class="status-left"></div>
                <div class="status-mail"><svg><use href="#mail"/></svg>0 Nachricht</div>
                <div class="status-right">
                    <div class="progress"></div>
                    <svg><use href="#doctor"/></svg>
                    <select aria-label="Arzt"><option>SNAPE, Seve.</option></select>
                </div>
            </footer>
        </div>
    </div>
</body>
</html>
```
FILE: styles.css
```css
* {
    box-sizing: border-box;
}
body {
    margin: 0;
    font: bold 12px/16px "Liberation Sans", Arial, sans-serif;
    color: #333;
    background: #eeeeee;
}
button, input, textarea, select {
    margin: 0;
    padding: 0;
    font: inherit;
    color: inherit;
    border-radius: 0;
}
button {
    display: flex;
    align-items: center;
    justify-content: center;
    border: 1px solid #7a8a99;
    background: linear-gradient(#dde8f3, #ffffff 30%, #b8cfe5);
}
input, textarea {
    border: 1px solid #7a8a99;
    background: white;
    outline: none;
    min-width: 0;
}
input:disabled {
    border-color: #b8cfe5;
    background: #fafafa;
}
textarea {
    display: block;
    resize: none;
    overflow: hidden;
}
h1, h2, h3 {
    margin: 0;
    font-size: inherit;
}
a {
    color: inherit;
    text-decoration: none;
}
svg {
    display: block;
    flex: none;
}
.defs {
    position: absolute;
}
.spacer {
    flex: 1;
}

/* window frame */
.desktop {
    display: flex;
    min-height: 100vh;
}
.desktop-edge {
    width: 4px;
    background: linear-gradient(#d6d2c9 0, #d6d2c9 14%, #f0f0f0 14%, #f0f0f0 83%, #000 83%);
}
.window {
    flex: 1;
    min-width: 0;
    display: flex;
    flex-direction: column;
}
.titlebar {
    display: flex;
    align-items: center;
    height: 23px;
    padding: 0 2px 0 4px;
    background: linear-gradient(90deg, #0a246a, #a6caf0);
}
.app-logo {
    width: 16px;
    height: 16px;
}
.window-title {
    margin-left: 5px;
    font: bold 14px/20px "DejaVu Sans Condensed", "DejaVu Sans", sans-serif;
    color: white;
}
.window-buttons {
    display: flex;
    margin-left: auto;
}
.window-buttons button {
    width: 20px;
    height: 18px;
    border: 1px solid;
    border-color: #fff #404040 #404040 #fff;
    box-shadow: inset -1px -1px #808080;
    background: #d4d0c8;
}
.window-buttons .close {
    margin-left: 2px;
}
.window-buttons svg {
    width: 16px;
    height: 14px;
}
.menubar {
    display: flex;
    gap: 12px;
    height: 24px;
    padding: 4px 6px;
    border-bottom: 1px solid #ccc;
    background: linear-gradient(#fff, #dcdcdc);
}
.workspace {
    flex: 1;
    display: flex;
}

/* module bar on the left */
.modules {
    width: 87px;
    display: flex;
    flex-direction: column;
    background: white;
}
.modules a {
    display: flex;
    flex-direction: column;
    align-items: center;
    gap: 5px;
    height: 58px;
    margin-bottom: 2px;
    padding-top: 2px;
    border: 1px solid transparent;
}
.modules a.active {
    border-color: #316ac5;
    background: #c1d2ee;
}
.modules svg {
    width: 32px;
    height: 32px;
}
.calendar-day {
    font-size: 17px;
    fill: #f28080;
}
.modules .quit {
    height: 36px;
    margin: 0;
}

/* patient header */
.main {
    flex: 1;
    min-width: 0;
    display: flex;
    flex-direction: column;
    padding: 5px;
    background: #ebf2fe;
}
.patient-header, .prescription-header {
    display: flex;
    align-items: center;
    height: 40px;
    border: 1px solid red;
}
.patient-header {
    padding: 0 13px 0 16px;
    background: linear-gradient(#fff, #dfdfdf);
}
.patient-header h1, .prescription-header h2 {
    font-size: 20px;
    line-height: 24px;
}
.patient-header h1 span {
    margin-right: 7px;
}
.gender {
    width: 24px;
    height: 24px;
    margin-right: 16px;
}
.header-tools {
    display: flex;
    gap: 6px;
    margin-left: auto;
}
.header-tools button {
    border: 0;
    background: none;
}
.header-tools svg {
    width: 32px;
    height: 32px;
}

.columns {
    flex: 1;
    display: flex;
}
.consultation {
    flex: 1;
    min-width: 0;
    display: flex;
    flex-direction: column;
    padding-top: 2px;
}
.tabs {
    padding-left: 2px;
}
.tab {
    width: 124px;
    height: 20px;
    margin-bottom: -1px;
    padding: 0 0 2px 3px;
    border: 1px solid #6382bf;
    border-bottom: 0;
    border-top-left-radius: 5px;
    background: #e6ecfc;
    position: relative;
}
.tab-body {
    flex: 1;
    display: flex;
    gap: 2px;
    padding: 8px 4px 8px 3px;
    border: 1px solid #6382bf;
}

/* entries */
.soap {
    width: 400px;
    display: flex;
    flex-direction: column;
    gap: 2px;
}
.accident {
    display: flex;
    align-items: flex-end;
    height: 48px;
    margin: 6px 0 2px 2px;
    padding: 0 2px 2px;
    border: 1px solid #b8cfe5;
    color: #999;
}
.accident legend {
    margin-left: 5px;
    padding: 0 4px;
    color: #333;
}
.accident legend label {
    display: flex;
    align-items: center;
    gap: 5px;
}
.accident input[type=checkbox] {
    appearance: none;
    width: 13px;
    height: 13px;
    background: linear-gradient(#fff, #c5d8ea);
}
.accident button {
    width: 24px;
    height: 22px;
    border-color: #999;
    background: #eee;
}
.accident button svg {
    width: 16px;
    height: 18px;
}
.accident > label {
    margin: 0 2px 0 5px;
    line-height: 22px;
}
.accident input[type=text] {
    width: 120px;
    height: 22px;
    background: #eee;
}
.entry {
    display: flex;
    flex-direction: column;
    padding: 2px 0 5px 2px;
    border: 1px solid #b8cfe5;
}
.entry.grow {
    flex: 1;
}
.entry-head {
    display: flex;
    align-items: center;
}
.entry-head .key {
    margin-left: 1px;
    padding: 0 2px;
}
.entry-head .name {
    margin-left: 1px;
    padding-right: 4px;
    white-space: nowrap;
}
.entry-head label:not(.name) {
    margin: 0 5px;
    white-space: nowrap;
}
.entry-head input {
    flex: 1;
    height: 20px;
}
.entry-text {
    flex: 1;
    display: flex;
}
.entry-text textarea {
    flex: 1;
}
.expand {
    width: 13px;
    justify-content: flex-start;
    padding-left: 2px;
    border: 0;
    background: none;
}
.expand::before {
    content: "";
    border: 4px solid transparent;
    border-left: 4px solid #000;
    border-right: 0;
}
.reason .key { background: linear-gradient(#fce3b0, #f4683a); }
.reason .name { background: #ff6633; }
.findings .key { background: linear-gradient(#ffffc8, #dcdc2c); }
.findings .name { background: #ffff33; }
.measures .key { background: linear-gradient(#f2f2f2, #b8b8b8); }
.measures .name { background: #cccccc; }
.diagnosis .key { background: linear-gradient(#80fcfc, #1c98b8); }
.diagnosis .name { background: #0099cc; }
.treatment .key { background: linear-gradient(#8cfc8c, #10b010); }
.treatment .name { background: #00cc00; }
.sickleave .key { background: linear-gradient(#fdf27c, #e89818); }
.sickleave .name { background: #ff9900; padding-right: 0; margin-right: 12px; }
.ke1 .key { background: linear-gradient(#f0fcfc, #8ce4e4); }
.ke1 .name { background: #99ffff; }
.ke2 .key { background: linear-gradient(#f4fcf4, #b4dcb4); }
.ke2 .name { background: #ccffcc; }
.ke3 .key { background: linear-gradient(#f0f0fc, #8484d4); }
.ke3 .name { background: #9999ff; }

.measures, .sickleave {
    padding-bottom: 4px;
}
.measure-grid {
    display: grid;
    grid-template-columns: 27px 47px 42px 30px 58px auto;
    row-gap: 2px;
    margin: 5px 0 0 3px;
}
.measure-grid input {
    height: 16px;
}
.measure-grid span {
    padding-left: 3px;
    font-weight: normal;
    font-size: 11px;
}
.period {
    display: flex;
    align-items: center;
    justify-content: space-between;
    margin-top: 4px;
    padding: 0 4px 0 1px;
    color: #999;
}
.date-field {
    display: flex;
    height: 20px;
}
.date-field input {
    width: 114px;
}
.date-field button {
    border-color: #999;
    background: #eee;
}
.spin {
    width: 16px;
    display: flex;
    flex-direction: column;
}
.spin button {
    flex: 1;
}
.pick {
    width: 21px;
}
.pick svg {
    width: 16px;
    height: 14px;
}

/* important data */
.record {
    flex: 1;
    min-width: 0;
    display: flex;
    flex-direction: column;
    gap: 6px;
}
.important {
    display: flex;
    flex-direction: column;
    border: 1px solid #7a8a99;
}
.important h2 {
    margin: 1px;
    padding: 1px 0 0 3px;
    background: linear-gradient(#fff, #b8cfe5);
}
.important-view {
    display: flex;
    gap: 7px;
    padding: 0 0 1px 7px;
    overflow: hidden;
}
.important-list {
    flex: none;
    width: 319px;
}
.list-head {
    display: flex;
    align-items: flex-end;
    justify-content: space-between;
    height: 20px;
    line-height: 14px;
    color: red;
}
.list-head button {
    width: 22px;
    height: 20px;
}
.list-head svg {
    width: 16px;
    height: 18px;
}
.list-box {
    display: flex;
    height: 136px;
    border: 1px solid #7a8a99;
}
.list-box textarea {
    flex: 1;
    border: 0;
}
.vscroll {
    width: 15px;
    display: flex;
    flex-direction: column;
    justify-content: space-between;
    border-left: 1px solid #7a8a99;
    background: #eee;
}
.vscroll button {
    height: 16px;
    border-width: 0 0 1px;
    background: #eee;
}
.vscroll .down {
    border-width: 1px 0 0;
}
.up::before, .down::before, .left::before, .right::before {
    content: "";
    border: 4px solid transparent;
}
.up::before {
    border-top: 0;
    border-bottom-color: #333;
}
.down::before {
    border-bottom: 0;
    border-top-color: #333;
}
.spin .up::before, .spin .down::before {
    border-width: 2px;
}
.spin .up::before {
    border-top: 0;
    border-bottom-color: #9db8d6;
}
.spin .down::before {
    border-bottom: 0;
    border-top-color: #9db8d6;
}
.left::before {
    border-left: 0;
    border-right-color: #333;
}
.right::before {
    border-right: 0;
    border-left-color: #333;
}
.hscroll {
    display: flex;
    height: 16px;
    border-top: 1px solid #6382bf;
    background: #eee;
}
.hscroll button {
    width: 16px;
    border-width: 0 1px 0 0;
    background: #eee;
}
.hscroll .right {
    border-width: 0 0 0 1px;
}
.track {
    flex: 1;
}
.thumb {
    display: flex;
    align-items: center;
    justify-content: center;
    width: 95%;
    height: 15px;
    border-right: 1px solid #6382bf;
    background: linear-gradient(#dde8f3, #fff 30%, #b8cfe5);
}
.thumb::before {
    content: "";
    width: 5px;
    height: 9px;
    background: repeating-linear-gradient(90deg, #6382bf 0 1px, #fff 1px 2px);
}

/* configurable entries and prescription */
.details {
    flex: 1;
    display: flex;
    border: 1px solid #7a8a99;
}
.custom {
    width: 418px;
    display: flex;
    flex-direction: column;
    gap: 2px;
    padding-bottom: 1px;
}
.custom .key {
    padding: 0 1px 0 2px;
}
.custom .name {
    padding-right: 0;
}
.custom .entry-head label {
    margin-right: auto;
}
.custom .entry-head input {
    flex: 0 0 131px;
}
.prescription {
    flex: 1;
    min-width: 0;
    display: flex;
    flex-direction: column;
    padding: 5px 6px 7px 8px;
}
.prescription-header {
    padding: 0 8px 0 11px;
    background: linear-gradient(#fff, #d0d5e0);
}
.prescription-header .header-tools {
    gap: 3px;
}
.pill {
    width: 32px;
    height: 32px;
    margin-right: 13px;
}
.prescription-body {
    flex: 1;
    display: flex;
    gap: 8px;
    padding: 11px 0 0 2px;
}
.kinds {
    align-self: flex-start;
    display: flex;
    flex-direction: column;
    gap: 5px;
    padding: 5px 6px;
    background: white;
}
.kinds button {
    width: 30px;
    height: 30px;
}
.kinds svg {
    width: 24px;
    height: 24px;
}
.kinds .cefip {
    flex-direction: column;
    align-items: flex-start;
    padding-left: 3px;
    font: bold 10px/9px "DejaVu Sans", sans-serif;
    color: #111;
}
.cefip span + span {
    padding-left: 5px;
}
.editors {
    flex: 1;
    display: flex;
    flex-direction: column;
}
.editor-top {
    flex: 0 0 159px;
}
.editor-top textarea {
    border-width: 2px 1px 1px 2px;
}
.editor-top .expand {
    width: 7px;
    padding-left: 1px;
}
.divider {
    height: 8px;
    border: solid #eee;
    border-width: 3px;
    background: #eee repeating-linear-gradient(90deg, #999 0 1px, #eee 1px 4px) 0 1px / 100% 1px no-repeat;
}
.editor-bottom {
    flex: 1;
    border-width: 2px 1px 1px 2px;
}

/* shortcuts on the right */
.shortcuts {
    width: 173px;
    display: flex;
    flex-direction: column;
    padding: 4px 3px 3px 4px;
    border: 1px solid #7a8a99;
    border-top: 0;
}
.shortcuts h3 {
    height: 20px;
    margin-bottom: 2px;
    padding: 2px;
    border: 1px solid #fff;
    background: linear-gradient(#edf5ff, #99ccff);
}
.shortcuts h3.green { background: linear-gradient(#f0fcec, #33e01c); }
.shortcuts h3.red { background: linear-gradient(#ffeaea, #ff1414); }
.shortcuts h3.yellow { background: linear-gradient(#ffffe8, #ffff00); }
.nav-grid {
    display: grid;
    grid-template-columns: 1fr 1fr 1fr;
    gap: 2px;
    margin-bottom: 5px;
}
.nav-grid button {
    height: 34px;
}
.selected {
    background: #b8cfe5;
}
.s24 { width: 24px; height: 24px; }
.s26 { width: 26px; height: 26px; }
.s30 { width: 30px; height: 30px; }
.dsp { width: 34px; height: 20px; }
.dsp text {
    fill: #777;
    font-weight: normal;
}
.dsp-my {
    font: italic 11px "Liberation Serif", serif;
}
.dsp-name {
    font-size: 8px;
}
.functions {
    display: flex;
    flex-direction: column;
    gap: 2px;
    font-size: 10px;
}
.functions button {
    height: 30px;
    justify-content: flex-start;
    padding-left: 1px;
    white-space: nowrap;
}
.functions svg {
    width: 24px;
    height: 24px;
}
.functions .small {
    width: 16px;
    height: 16px;
    margin: 0 2px;
}
.functions .epsos {
    gap: 3px;
    padding: 0 0 2px 2px;
    font: 19px/24px "Open Sans", sans-serif;
    font-weight: 600;
    color: #3590d0;
}
.epsos svg {
    width: 32px;
}
.epsos b {
    color: #d92230;
}
.waitroom {
    height: 42px;
    margin-bottom: 5px;
}
.waitroom svg {
    width: 62px;
    height: 34px;
}
.appointments {
    height: 70px;
    margin-bottom: 6px;
    padding: 4px;
}
.appointments span {
    flex: 1;
    height: 60px;
    display: flex;
    align-items: center;
    justify-content: center;
    border: 1px solid #000;
    border-radius: 8px;
    background: linear-gradient(#e2efd8, #eff5e4 30%, #d4e4dc);
}
.appointments svg {
    width: 32px;
    height: 28px;
}
.billing {
    display: grid;
    grid-template-columns: 1fr 1fr;
    gap: 2px;
    margin-bottom: 5px;
    font-size: 10px;
}
.billing button {
    height: 22px;
}
.recent {
    display: flex;
    flex-direction: column;
    gap: 2px;
    padding: 2px;
    font-size: 10px;
}
.recent button {
    height: 18px;
    display: block;
    padding-left: 2px;
    text-align: left;
    line-height: 14px;
}
.recent button:disabled {
    border-color: #999;
    background: #eee;
    color: #999;
}

/* status bar */
.statusbar {
    display: flex;
    align-items: center;
    height: 30px;
    background: #eee;
    color: #888;
}
.statusbar > div {
    height: 24px;
    display: flex;
    align-items: center;
}
.status-left {
    width: 209px;
    border-right: 1px solid #6382bf;
}
.status-mail {
    width: 250px;
    padding-left: 9px;
    gap: 4px;
    border-right: 1px solid #6382bf;
}
.status-mail svg {
    width: 16px;
    height: 16px;
}
.status-right {
    margin-left: auto;
    padding: 0 4px 0 5px;
    border-left: 1px solid #6382bf;
}
.progress {
    width: 148px;
    height: 24px;
    border: 1px solid #7a8a99;
}
.status-right svg {
    width: 24px;
    height: 24px;
    margin: 0 4px;
}
.status-right select {
    width: 160px;
    height: 24px;
    padding-left: 2px;
    appearance: none;
    border: 1px solid #7a8a99;
    font-size: 16px;
    color: #333;
    background:
        linear-gradient(#333, #333) calc(100% - 5px) 9px / 9px 1px no-repeat,
        linear-gradient(#333, #333) calc(100% - 6px) 10px / 7px 1px no-repeat,
        linear-gradient(#333, #333) calc(100% - 7px) 11px / 5px 1px no-repeat,
        linear-gradient(#333, #333) calc(100% - 8px) 12px / 3px 1px no-repeat,
        linear-gradient(#336600, #336600) 100% 0 / 19px 100% no-repeat,
        white;
}
```
